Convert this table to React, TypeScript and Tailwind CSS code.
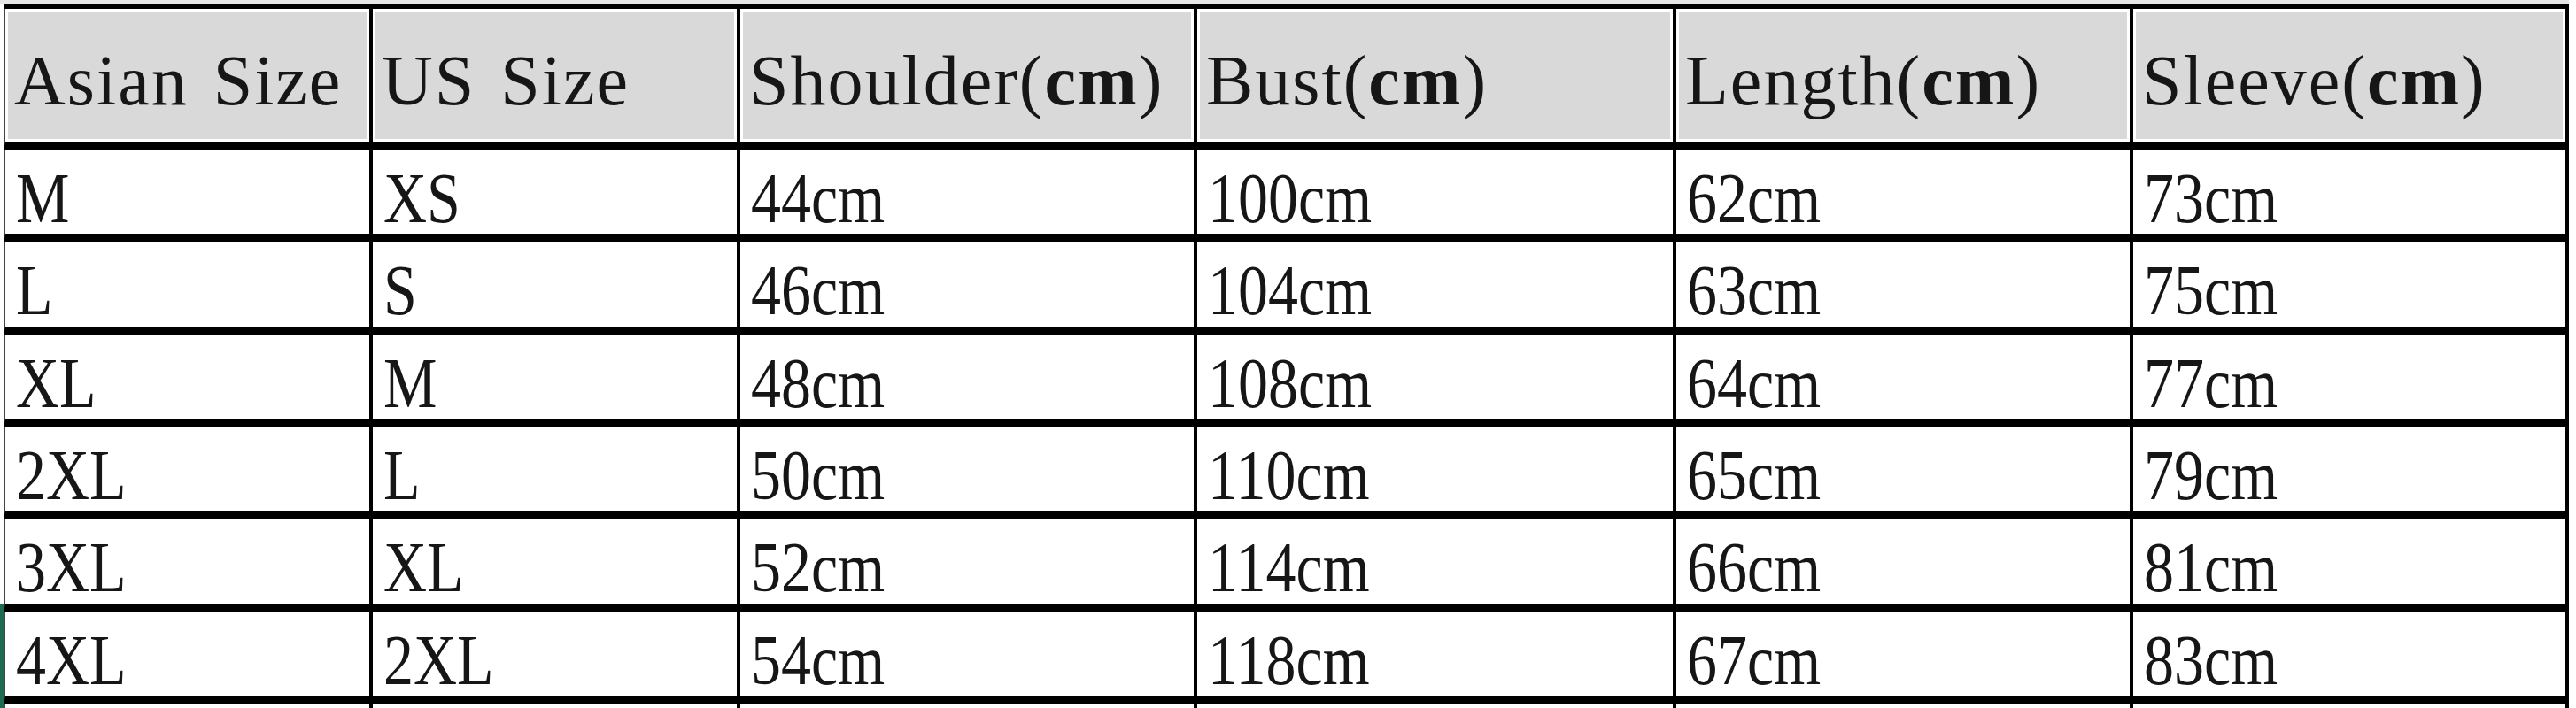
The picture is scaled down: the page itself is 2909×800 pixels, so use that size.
import React from "react";

const headers: React.ReactNode[] = [
  <>Asian Size</>,
  <>US Size</>,
  <>
    Shoulder(<span className="font-bold">cm</span>)
  </>,
  <>
    Bust(<span className="font-bold">cm</span>)
  </>,
  <>
    Length(<span className="font-bold">cm</span>)
  </>,
  <>
    Sleeve(<span className="font-bold">cm</span>)
  </>,
];

const rows: string[][] = [
  ["M", "XS", "44cm", "100cm", "62cm", "73cm"],
  ["L", "S", "46cm", "104cm", "63cm", "75cm"],
  ["XL", "M", "48cm", "108cm", "64cm", "77cm"],
  ["2XL", "L", "50cm", "110cm", "65cm", "79cm"],
  ["3XL", "XL", "52cm", "114cm", "66cm", "81cm"],
  ["4XL", "2XL", "54cm", "118cm", "67cm", "83cm"],
];

function borderFor(i: number) {
  if (i === 0) return "border-l-2 border-l-[#444]";
  if (i === 5) return "border-l-4 border-r-4 border-l-black border-r-black";
  return "border-l-4 border-l-black";
}

export default function App() {
  return (
    <div className="relative w-[2909px] h-[800px] overflow-hidden bg-white font-['Liberation_Serif',serif] text-[#161616]">
      <div className="h-[4px] w-[2901px] bg-[#e6e6e6]" />
      <div className="ml-[4px] w-[2897px] border-t-[6px] border-black">
        <div className="grid grid-cols-[413px_415px_516px_541px_516px_496px]">
          {headers.map((h, i) => (
            <div
              key={`h${i}`}
              className={`h-[160px] border-b-[10px] border-b-black bg-white p-[3px] ${borderFor(i)}`}
            >
              <div className="flex h-full items-center bg-[#d9d9d9] pl-[7px] pt-[12px]">
                <span className="whitespace-nowrap text-[80px] leading-none tracking-[2px] [word-spacing:6px]">
                  {h}
                </span>
              </div>
            </div>
          ))}
          {rows.map((r, ri) =>
            r.map((c, ci) => (
              <div
                key={`r${ri}c${ci}`}
                className={`flex h-[104.33px] items-center border-b-[10px] border-b-black pl-[12px] pt-[14px] ${borderFor(ci)}`}
              >
                <span className="inline-block origin-left scale-x-[0.85] whitespace-nowrap text-[80px] leading-none">
                  {c}
                </span>
              </div>
            ))
          )}
          {rows[0].map((_, ci) => (
            <div key={`tail${ci}`} className={`h-[8px] ${borderFor(ci)}`} />
          ))}
        </div>
      </div>
      <div className="absolute left-0 top-[683px] h-[117px] w-[4px] bg-[#1e6b52]" />
    </div>
  );
}
